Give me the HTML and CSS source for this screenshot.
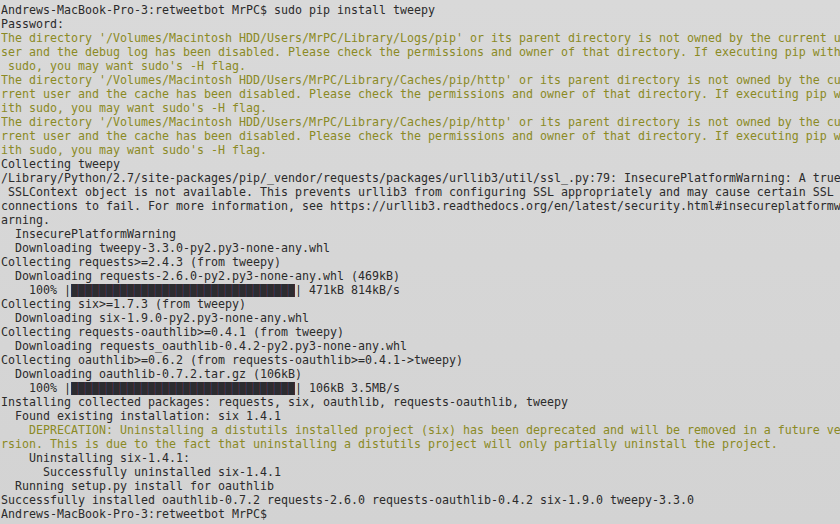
FILE: index.html
```html
<!DOCTYPE html>
<html lang="en">
<head>
    <meta charset="UTF-8">
    <title>Terminal: pip install tweepy</title>
    <link rel="stylesheet" href="styles.css">
</head>
<body>
    <!-- terminal window -->
    <div class="term">
        <div class="ln">Andrews-MacBook-Pro-3:retweetbot MrPC$ sudo pip install tweepy</div>
        <div class="ln">Password:</div>
        <!-- 경고 메시지 -->
        <div class="ln warn">The directory '/Volumes/Macintosh HDD/Users/MrPC/Library/Logs/pip' or its parent directory is not owned by the current u</div>
        <div class="ln warn">ser and the debug log has been disabled. Please check the permissions and owner of that directory. If executing pip with</div>
        <div class="ln warn"> sudo, you may want sudo's -H flag.</div>
        <div class="ln warn">The directory '/Volumes/Macintosh HDD/Users/MrPC/Library/Caches/pip/http' or its parent directory is not owned by the cu</div>
        <div class="ln warn">rrent user and the cache has been disabled. Please check the permissions and owner of that directory. If executing pip w</div>
        <div class="ln warn">ith sudo, you may want sudo's -H flag.</div>
        <div class="ln warn">The directory '/Volumes/Macintosh HDD/Users/MrPC/Library/Caches/pip/http' or its parent directory is not owned by the cu</div>
        <div class="ln warn">rrent user and the cache has been disabled. Please check the permissions and owner of that directory. If executing pip w</div>
        <div class="ln warn">ith sudo, you may want sudo's -H flag.</div>
        <div class="ln">Collecting tweepy</div>
        <div class="ln">/Library/Python/2.7/site-packages/pip/_vendor/requests/packages/urllib3/util/ssl_.py:79: InsecurePlatformWarning: A true</div>
        <div class="ln"> SSLContext object is not available. This prevents urllib3 from configuring SSL appropriately and may cause certain SSL </div>
        <div class="ln">connections to fail. For more information, see https://urllib3.readthedocs.org/en/latest/security.html#insecureplatformw</div>
        <div class="ln">arning.</div>
        <div class="ln">  InsecurePlatformWarning</div>
        <div class="ln">  Downloading tweepy-3.3.0-py2.py3-none-any.whl</div>
        <div class="ln">Collecting requests&gt;=2.4.3 (from tweepy)</div>
        <div class="ln">  Downloading requests-2.6.0-py2.py3-none-any.whl (469kB)</div>
        <div class="ln"><span>    100% |</span><span class="bar"></span><span>| 471kB 814kB/s</span></div>
        <div class="ln">Collecting six&gt;=1.7.3 (from tweepy)</div>
        <div class="ln">  Downloading six-1.9.0-py2.py3-none-any.whl</div>
        <div class="ln">Collecting requests-oauthlib&gt;=0.4.1 (from tweepy)</div>
        <div class="ln">  Downloading requests_oauthlib-0.4.2-py2.py3-none-any.whl</div>
        <div class="ln">Collecting oauthlib&gt;=0.6.2 (from requests-oauthlib&gt;=0.4.1-&gt;tweepy)</div>
        <div class="ln">  Downloading oauthlib-0.7.2.tar.gz (106kB)</div>
        <div class="ln"><span>    100% |</span><span class="bar"></span><span>| 106kB 3.5MB/s</span></div>
        <div class="ln">Installing collected packages: requests, six, oauthlib, requests-oauthlib, tweepy</div>
        <div class="ln">  Found existing installation: six 1.4.1</div>
        <div class="ln warn">    DEPRECATION: Uninstalling a distutils installed project (six) has been deprecated and will be removed in a future ve</div>
        <div class="ln warn">rsion. This is due to the fact that uninstalling a distutils project will only partially uninstall the project.</div>
        <div class="ln">    Uninstalling six-1.4.1:</div>
        <div class="ln">      Successfully uninstalled six-1.4.1</div>
        <div class="ln">  Running setup.py install for oauthlib</div>
        <div class="ln">Successfully installed oauthlib-0.7.2 requests-2.6.0 requests-oauthlib-0.4.2 six-1.9.0 tweepy-3.3.0</div>
        <div class="ln">Andrews-MacBook-Pro-3:retweetbot MrPC$ </div>
    </div>
</body>
</html>
```

FILE: styles.css
```css
html,body{
    margin: 0;
    padding: 0;
}
body{
    width: 840px;
    height: 524px;
    overflow: hidden;
    background-color: #d6d6d6;
    background-image: linear-gradient(to bottom, #d9d9d9, #d3d3d3);
}

/* 터미널 본문 */
.term{
    padding: 3px 0 0 1px;
    font-family: "DejaVu Sans Mono", monospace;
    font-size: 11.63px;
    line-height: 14px;
    color: #2b2b2b;
    overflow: hidden;
}
/* 한 줄씩 */
.ln{
    height: 14px;
    white-space: pre;
    overflow: hidden;
}

/* 노란 경고 글자 */
.warn{
    color: #8b8a24;
}

/* 진행바: 32칸 블록 (칸당 7px) */
.bar{
    display: inline-block;
    width: 224px;
    height: 13px;
    margin-top: 1px;
    vertical-align: top;
    background-color: #2c2c30;
    background-image: repeating-linear-gradient(to right,
        #2a3552 0, #2a3552 1px,
        #2c2c30 1px, #2c2c30 6px,
        #4a2a30 6px, #4a2a30 7px);
}
```
